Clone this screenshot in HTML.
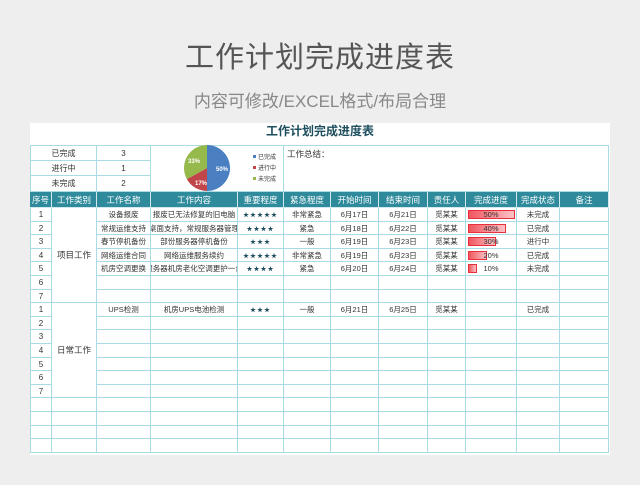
<!DOCTYPE html>
<html><head><meta charset="utf-8"><style>
body{margin:0;width:640px;height:485px;background:#eeeeee;font-family:"Liberation Sans","Noto Sans CJK SC",sans-serif;position:relative;overflow:hidden}
.h1{position:absolute;top:34px;left:0;width:640px;text-align:center;font-size:29px;color:#555;letter-spacing:1px}
.h2{position:absolute;top:87px;left:0;width:640px;text-align:center;font-size:17px;color:#888}
.panel{position:absolute;left:30px;top:123px;width:580px;height:332px;background:#fff}
.t{position:absolute;left:30px;top:123px;width:580px;text-align:center;font-size:12px;font-weight:bold;color:#1d4f5e;line-height:16px}
.c{position:absolute;box-sizing:border-box;border-right:1px solid #a8dbe2;border-bottom:1px solid #a8dbe2;font-size:7.5px;color:#333;display:flex;align-items:center;justify-content:center;white-space:nowrap;overflow:hidden}
.hd{background:#2f8b9c;color:#fff;font-size:8.5px;border-color:#cfe9ee}
.bar{position:absolute;height:9px;background:linear-gradient(90deg,#f0565f,#fbc3c6);border:1px solid #e8303c;box-sizing:border-box}
</style></head><body>
<div class="h1">工作计划完成进度表</div>
<div class="h2">内容可修改/EXCEL格式/布局合理</div>
<div class="panel"></div>
<div class="t">工作计划完成进度表</div>
<div id="g"></div>
<svg style="position:absolute;left:0;top:0" width="640" height="485">
<path d="M207,168 L207,145 A23,23 0 0 1 207,191 Z" fill="#4a7fc1"/>
<path d="M207,168 L207,191 A23,23 0 0 1 186.85,179.08 Z" fill="#c0464a"/>
<path d="M207,168 L186.85,179.08 A23,23 0 0 1 207,145 Z" fill="#96b94c"/>
<text x="216" y="171" font-size="6" fill="#fff" font-weight="bold" font-family="Liberation Sans">50%</text>
<text x="195" y="185" font-size="6" fill="#fff" font-weight="bold" font-family="Liberation Sans">17%</text>
<text x="188" y="163" font-size="6" fill="#fff" font-weight="bold" font-family="Liberation Sans">33%</text>
<rect x="253" y="155" width="3" height="3" fill="#4a7fc1"/><text x="258" y="159" font-size="6" fill="#333" font-family="Noto Sans CJK SC">已完成</text>
<rect x="253" y="166" width="3" height="3" fill="#c0464a"/><text x="258" y="170" font-size="6" fill="#333" font-family="Noto Sans CJK SC">进行中</text>
<rect x="253" y="177" width="3" height="3" fill="#96b94c"/><text x="258" y="181" font-size="6" fill="#333" font-family="Noto Sans CJK SC">未完成</text>
</svg>
<script>
var g=document.getElementById('g'),h='';
function c(x1,y1,x2,y2,t,cls,st){h+='<div class="c '+(cls||'')+'" style="left:'+x1+'px;top:'+y1+'px;width:'+(x2-x1)+'px;height:'+(y2-y1)+'px;'+(st||'')+'">'+(t||'')+'</div>';}
var X=[30,52,97,151,238,284,331,379,428,466,517,560,609];
var sr=[146,161,176,192];var sl=['已完成','进行中','未完成'],sv=['3','1','2'];
h+='<div style="position:absolute;left:30px;top:145px;width:579px;height:1px;background:#a8dbe2"></div>';
for(var i=0;i<3;i++){c(30,sr[i],97,sr[i+1],sl[i],'','border-left:1px solid #a8dbe2;font-size:8px');c(97,sr[i],151,sr[i+1],sv[i],'','font-size:8px');}
c(151,146,284,192,'');c(284,146,609,192,'<span style="position:absolute;left:3px;top:2px;font-size:8.5px">工作总结：</span>');
var hd=['序号','工作类别','工作名称','工作内容','重要程度','紧急程度','开始时间','结束时间','责任人','完成进度','完成状态','备注'];
for(var j=0;j<12;j++)c(X[j],192,X[j+1],208,hd[j],'hd');
var R=13.6,y0=208;
var d=[['设备报废','报废已无法修复的旧电脑','★★★★★','非常紧急','6月17日','6月21日','觅某某',50,'未完成'],
['常规运维支持','桌面支持，常规服务器管理','★★★★','紧急','6月18日','6月22日','觅某某',40,'已完成'],
['春节停机备份','部份服务器停机备份','★★★','一般','6月19日','6月23日','觅某某',30,'进行中'],
['网络运维合同','网络运维服务续约','★★★★★','非常紧急','6月19日','6月23日','觅某某',20,'已完成'],
['机房空调更换','服务器机房老化空调更护一台','★★★★','紧急','6月20日','6月24日','觅某某',10,'未完成']];
for(var r=0;r<18;r++){
 var ya=Math.round(y0+r*R),yb=Math.round(y0+(r+1)*R);
 var num=r<7?(r+1):(r<14?(r-6):'');
 c(30,ya,52,yb,num,'','border-left:1px solid #a8dbe2;font-size:8px');
 if(r>=14)c(52,ya,97,yb,'');
 var row=r<5?d[r]:(r==7?['UPS检测','机房UPS电池检测','★★★','一般','6月21日','6月25日','觅某某',null,'已完成']:null);
 for(var j=2;j<12;j++){
  var t='';
  if(row){var m={2:0,3:1,4:2,5:3,6:4,7:5,8:6,10:8};if(m[j]!==undefined)t=row[m[j]];
   if(j==9&&row[7]!==null){t='<span style="position:relative;z-index:1">'+row[7]+'%</span>';}}
  c(X[j],ya,X[j+1],yb,t,'',j==4?'color:#1d4f5e;font-size:6px;letter-spacing:1px':'');
  if(row&&j==9&&row[7]!==null)h+='<div class="bar" style="left:468px;top:'+(ya+2)+'px;width:'+(row[7]*0.94)+'px"></div>';
 }
}
c(52,208,97,Math.round(y0+7*R),'项目工作','','font-size:8.5px');
c(52,Math.round(y0+7*R),97,Math.round(y0+14*R),'日常工作','','font-size:8.5px');
g.innerHTML=h;
</script>
</body></html>
